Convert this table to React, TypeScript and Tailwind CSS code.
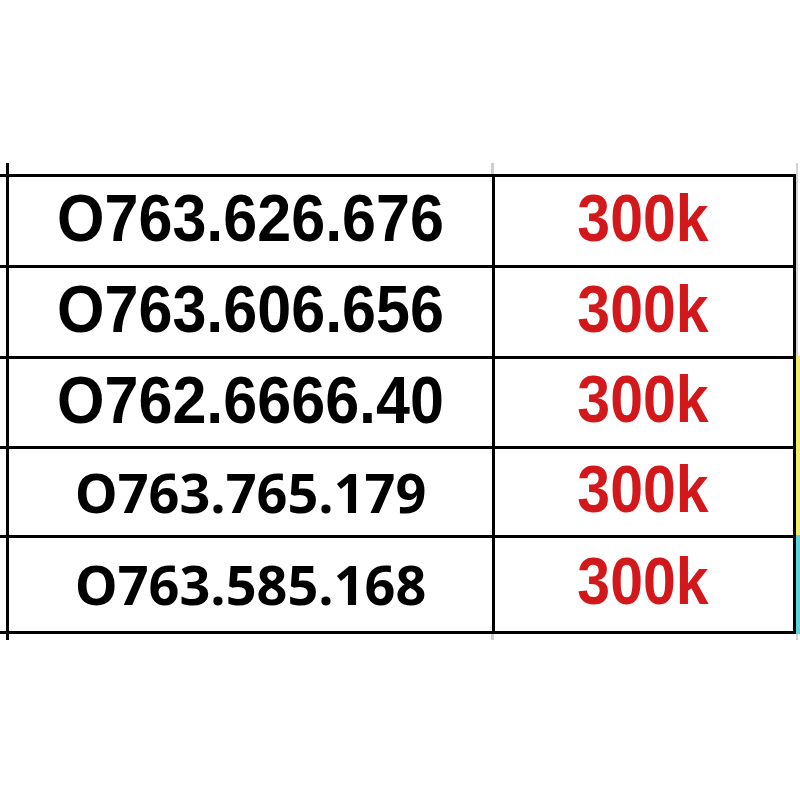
import React from "react";

type Row = { num: string; alt: boolean; h: string; strip: string };

const rows: Row[] = [
  { num: "O763.626.676", alt: false, h: "h-[91px]", strip: "gray" },
  { num: "O763.606.656", alt: false, h: "h-[91px]", strip: "gray" },
  { num: "O762.6666.40", alt: false, h: "h-[90px]", strip: "yellow" },
  { num: "O763.765.179", alt: true, h: "h-[89px]", strip: "yellow" },
  { num: "O763.585.168", alt: true, h: "h-[96px]", strip: "cyan" },
];

function Strip({ kind }: { kind: string }) {
  if (kind === "yellow") return <div className="w-[4px] bg-[#f2ea6a]" />;
  if (kind === "cyan") return <div className="w-[4px] bg-[#5cd4de]" />;
  return (
    <div className="w-[4px] flex">
      <div className="w-[2px] bg-[#d4d4d4]" />
    </div>
  );
}

export default function App() {
  return (
    <div className="w-[800px] h-[800px] bg-white pt-[163px]">
      {/* top stubs */}
      <div className="flex h-[11px] w-[800px]">
        <div className="w-[6px]" />
        <div className="w-[3px] bg-black" />
        <div className="w-[482px]" />
        <div className="w-[3px] bg-[#cfcfcf]" />
        <div className="w-[302px]" />
        <div className="w-[2px] bg-[#d4d4d4]" />
      </div>
      {rows.map((r, i) => (
        <div key={i} className={`flex w-[800px] ${r.h}`}>
          <div className="w-[796px] border-t-[3px] border-black flex">
            <div className="w-[6px]" />
            {r.alt ? (
              <div className="w-[486px] border-l-[3px] border-black flex items-center justify-center pb-[1px]">
                <span className="font-['Open_Sans',sans-serif] font-bold text-[54px] leading-none text-black">
                  {r.num}
                </span>
              </div>
            ) : (
              <div className="w-[486px] border-l-[3px] border-black flex items-center justify-center pb-[6px]">
                <span className="font-['Liberation_Sans',Arial,sans-serif] font-bold text-[56px] leading-none text-black scale-x-[1.09] scale-y-[1.2]">
                  {r.num}
                </span>
              </div>
            )}
            <div className="flex-1 border-l-[3px] border-r-[3px] border-black flex items-center justify-center pb-[4px]">
              <span className="font-['Liberation_Sans',Arial,sans-serif] font-bold text-[59px] leading-none text-[#d3181c] scale-y-[1.12] pr-[2px]">
                300k
              </span>
            </div>
          </div>
          <Strip kind={r.strip} />
        </div>
      ))}
      {/* bottom border */}
      <div className="flex w-[800px]">
        <div className="w-[796px] h-[3px] bg-black" />
        <div className="w-[4px] bg-[#5cd4de]" />
      </div>
      <div className="flex h-[6px] w-[800px]">
        <div className="w-[6px]" />
        <div className="w-[3px] bg-black" />
        <div className="w-[482px]" />
        <div className="w-[3px] bg-[#cfcfcf]" />
        <div className="w-[302px]" />
        <div className="w-[2px] bg-[#d4d4d4]" />
      </div>
    </div>
  );
}
